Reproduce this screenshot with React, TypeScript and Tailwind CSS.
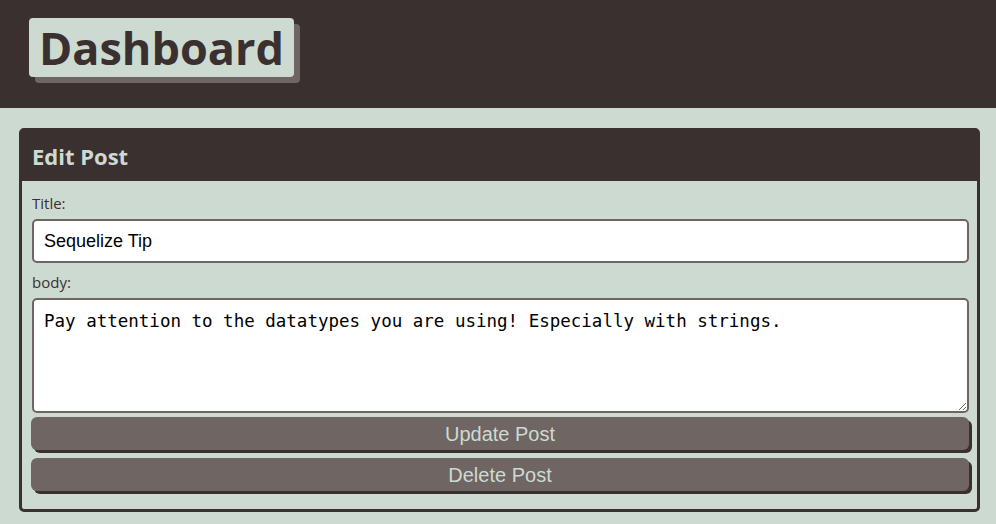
export default function App() {
  return (
    <div className="w-[996px] h-[524px] overflow-hidden bg-[#cddad2]" style={{ fontFamily: '"Open Sans", sans-serif' }}>
      <header className="h-[108px] bg-[#3a3030] pl-[29px] pt-[18px]">
        <h1 className="inline-block h-[59px] rounded-[4px] bg-[#cddad2] px-[10px] text-[45px] font-bold leading-[59px] text-[#3a3030] shadow-[6px_6px_0_#6f6664]">
          Dashboard
        </h1>
      </header>

      <section className="ml-[19px] mr-[16px] mt-[20px] h-[384px] rounded-[5px] border-[3px] border-[#3a3030] flex flex-col">
        <h2 className="h-[50px] bg-[#3a3030] pl-[10px] text-[22px] font-bold leading-[50px] text-[#cddad2]">
          Edit Post
        </h2>
        <form className="flex flex-col px-[9px] pt-[12px]">
          <label className="text-[15px] leading-[20px] text-[#3a3030] pl-[1px]">Title:</label>
          <input
            defaultValue="Sequelize Tip"
            className="mt-[6px] ml-[1px] h-[44px] w-[937px] rounded-[5px] border-2 border-[#6f6664] bg-white px-[10px] text-[18px] text-black outline-none"
            style={{ fontFamily: '"Liberation Sans", Arial, sans-serif' }}
          />
          <label className="mt-[9px] text-[15px] leading-[20px] text-[#3a3030] pl-[1px]">body:</label>
          <textarea
            defaultValue="Pay attention to the datatypes you are using! Especially with strings."
            className="mt-[6px] ml-[1px] h-[115px] w-[937px] rounded-[5px] border-2 border-[#6f6664] bg-white px-[10px] py-[10px] text-[17.5px] leading-[22px] text-black outline-none resize-y"
            style={{ fontFamily: '"DejaVu Sans Mono", monospace' }}
          />
          <button
            type="button"
            className="mt-[4px] h-[33px] w-[938px] rounded-[6px] bg-[#6f6664] text-[20px] text-[#cddad2] shadow-[3px_3px_0_#3a3030]"
            style={{ fontFamily: '"Liberation Sans", Arial, sans-serif' }}
          >
            Update Post
          </button>
          <button
            type="button"
            className="mt-[8px] h-[33px] w-[938px] rounded-[6px] bg-[#6f6664] text-[20px] text-[#cddad2] shadow-[3px_3px_0_#3a3030]"
            style={{ fontFamily: '"Liberation Sans", Arial, sans-serif' }}
          >
            Delete Post
          </button>
        </form>
      </section>
    </div>
  )
}
